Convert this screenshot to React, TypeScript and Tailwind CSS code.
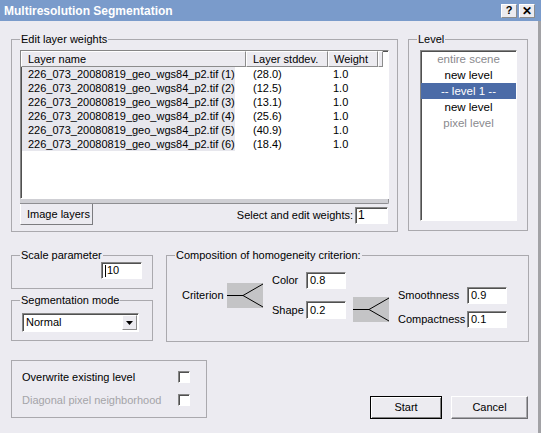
import React from "react";

const sunken =
  "bg-white border border-t-[#868686] border-l-[#868686] border-b-white border-r-white shadow-[inset_1px_1px_0_#505050]";
const raised =
  "bg-[#ecebf0] border border-t-white border-l-white border-b-[#8c8c8c] border-r-[#8c8c8c]";

const rows = [
  { name: "226_073_20080819_geo_wgs84_p2.tif (1)", dev: "(28.0)" },
  { name: "226_073_20080819_geo_wgs84_p2.tif (2)", dev: "(12.5)" },
  { name: "226_073_20080819_geo_wgs84_p2.tif (3)", dev: "(13.1)" },
  { name: "226_073_20080819_geo_wgs84_p2.tif (4)", dev: "(25.6)" },
  { name: "226_073_20080819_geo_wgs84_p2.tif (5)", dev: "(40.9)" },
  { name: "226_073_20080819_geo_wgs84_p2.tif (6)", dev: "(18.4)" },
];

const levels = [
  { label: "entire scene", kind: "muted" },
  { label: "new level", kind: "normal" },
  { label: "-- level 1 --", kind: "active" },
  { label: "new level", kind: "normal" },
  { label: "pixel level", kind: "muted" },
];

function Group({
  legend,
  className,
  children,
}: {
  legend?: string;
  className: string;
  children: React.ReactNode;
}) {
  return (
    <div className={`border border-[#aaa9ae] ${className}`}>
      {legend && (
        <span className="-mt-[8px] ml-[8px] block w-fit bg-[#ecebf1] px-[1px] leading-[14px]">
          {legend}
        </span>
      )}
      {children}
    </div>
  );
}

function Field({ value, className = "" }: { value: string; className?: string }) {
  return (
    <div className={`${sunken} flex h-[17px] w-[40px] items-center pl-[3px] leading-none ${className}`}>
      {value}
    </div>
  );
}

function Fork() {
  return (
    <svg width="36" height="25" viewBox="0 0 36 25" className="block bg-[#c4c4c6]">
      <path d="M0 12.5H16L36 1M16 12.5L36 24" fill="none" stroke="#000" strokeWidth="1" />
    </svg>
  );
}

export default function App() {
  return (
    <div className="flex h-[433px] w-[541px] flex-col overflow-hidden bg-[#ecebf1] font-['Liberation_Sans',Arial,sans-serif] text-[11px] text-black">
      {/* Title bar */}
      <div className="flex h-[21px] shrink-0 items-center bg-[#7a9bcb] pl-[4px] pr-[6px]">
        <span className="text-[12px] font-bold leading-none text-white">
          Multiresolution Segmentation
        </span>
        <div className="ml-auto flex gap-[2px]">
          <div className={`${raised} flex h-[14px] w-[16px] items-center justify-center text-[11px] font-bold leading-none`}>
            ?
          </div>
          <div className={`${raised} flex h-[14px] w-[16px] items-center justify-center text-[12px] font-bold leading-none`}>
            ✕
          </div>
        </div>
      </div>

      <div className="flex flex-1 flex-col border-r-[3px] border-r-[#a2a2a6]">
        {/* Top row */}
        <div className="flex pt-[18px]">
          <Group legend="Edit layer weights" className="ml-[11px] h-[193px] w-[387px]">
            <div className={`${sunken} ml-[8px] mt-[4px] h-[149px] w-[369px] overflow-hidden`}>
              <div className="flex h-[16px]">
                <div className={`${raised} w-[225px] pl-[6px] leading-[14px]`}>Layer name</div>
                <div className={`${raised} w-[82px] pl-[6px] leading-[14px]`}>Layer stddev.</div>
                <div className={`${raised} w-[50px] pl-[5px] leading-[14px]`}>Weight</div>
                <div className={`${raised} w-[5px]`} />
              </div>
              {rows.map((r) => (
                <div key={r.name} className="flex h-[14px] leading-[14px]">
                  <div className="w-[225px] pl-[1px]">
                    <div className="w-[213px] bg-[#e7e7ed] pl-[6px]">{r.name}</div>
                  </div>
                  <div className="w-[82px] pl-[7px]">{r.dev}</div>
                  <div className="w-[50px] pl-[5px]">1.0</div>
                </div>
              ))}
            </div>
            <div className="ml-[8px] h-[5px] w-[369px] rounded-br-[2px] border-b border-r border-[#8e8e92] bg-[#cfcfd4]" />
            <div className="ml-[8px] flex h-[22px] w-[369px] items-center">
              <div className="flex h-[21px] w-[73px] items-center self-start border-b border-l border-r border-b-[#7c7c80] border-l-white border-r-[#7c7c80] pl-[6px]">
                Image layers
              </div>
              <div className="flex flex-1 items-center justify-end">
                <span>Select and edit weights:</span>
                <div className={`${sunken} ml-[2px] mr-[1px] flex h-[17px] w-[33px] items-center pl-[2px] text-[12px] leading-none`}>
                  1
                </div>
              </div>
            </div>
          </Group>

          <Group legend="Level" className="ml-[10px] h-[192px] w-[120px]">
            <div className={`${sunken} ml-[11px] mt-[4px] h-[171px] w-[97px]`}>
              {levels.map((l, i) => (
                <div
                  key={i}
                  className={`h-[16px] text-center text-[11.5px] leading-[16px] ${
                    l.kind === "active"
                      ? "bg-[#4b6ba7] text-white"
                      : l.kind === "muted"
                      ? "text-[#8a8a8e]"
                      : "text-black"
                  }`}
                >
                  {l.label}
                </div>
              ))}
            </div>
          </Group>
        </div>

        {/* Middle row */}
        <div className="mt-[23px] flex items-start pl-[11px]">
          <div className="flex w-[142px] flex-col">
            <Group legend="Scale parameter" className="h-[34px]">
              <div className="flex justify-end pr-[10px]">
                <div className={`${sunken} flex h-[17px] w-[41px] items-center pl-[3px] leading-none`}>
                  <span className="mr-[1px] h-[12px] w-px bg-black" />
                  10
                </div>
              </div>
            </Group>
            <Group legend="Segmentation mode" className="mt-[11px] h-[41px]">
              <div className={`${sunken} ml-[10px] mt-[6px] flex h-[19px] w-[117px] items-center`}>
                <span className="flex-1 pl-[3px]">Normal</span>
                <div className={`${raised} mr-[1px] flex h-[15px] w-[15px] items-center justify-center`}>
                  <svg width="7" height="4" viewBox="0 0 7 4">
                    <path d="M0 0H7L3.5 4Z" fill="#000" />
                  </svg>
                </div>
              </div>
            </Group>
          </div>

          <Group legend="Composition of homogeneity criterion:" className="ml-[13px] h-[87px] w-[363px]">
            <div className="flex items-start pl-[15px]">
              <span className="mt-[26px] w-[45px] leading-[14px]">Criterion</span>
              <div className="mt-[21px]">
                <Fork />
              </div>
              <div className="ml-[9px] mt-[10px] flex flex-col gap-[12px]">
                <div className="flex items-center">
                  <span className="w-[34px]">Color</span>
                  <Field value="0.8" />
                </div>
                <div className="flex items-center">
                  <span className="w-[34px]">Shape</span>
                  <Field value="0.2" className="h-[18px]" />
                </div>
              </div>
              <div className="ml-[7px] mt-[35px]">
                <Fork />
              </div>
              <div className="ml-[9px] mt-[25px] flex flex-col gap-[7px]">
                <div className="flex items-center">
                  <span className="w-[69px]">Smoothness</span>
                  <Field value="0.9" />
                </div>
                <div className="flex items-center">
                  <span className="w-[69px]">Compactness</span>
                  <Field value="0.1" />
                </div>
              </div>
            </div>
          </Group>
        </div>

        {/* Bottom row */}
        <div className="mt-[18px] flex items-start pl-[11px]">
          <Group className="flex h-[58px] w-[196px] flex-col gap-[9px] pt-[9px]">
            <div className="flex h-[14px] items-center">
              <span className="ml-[10px] w-[156px]">Overwrite existing level</span>
              <div className={`${sunken} h-[12px] w-[12px]`} />
            </div>
            <div className="flex h-[14px] items-center">
              <span className="ml-[10px] w-[156px] text-[#a4a4a8]">Diagonal pixel neighborhood</span>
              <div className={`${sunken} h-[12px] w-[12px] bg-[#ecebf0]`} />
            </div>
          </Group>

          <button
            type="button"
            className="ml-[163px] mt-[36px] h-[23px] w-[72px] border border-black bg-[#ecebf0] shadow-[inset_1px_1px_0_#fff,inset_-1px_-1px_0_#808080]"
          >
            Start
          </button>
          <button
            type="button"
            className="ml-[9px] mt-[36px] h-[23px] w-[77px] border border-t-white border-l-white border-b-[#6e6e72] border-r-[#6e6e72] bg-[#ecebf0] shadow-[inset_-1px_-1px_0_#a8a8ac]"
          >
            Cancel
          </button>
        </div>
      </div>
    </div>
  );
}
